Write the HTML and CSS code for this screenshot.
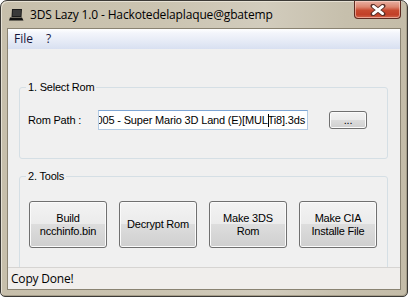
FILE: index.html
```html
<!DOCTYPE html>
<html>
<head>
<meta charset="utf-8">
<link rel="stylesheet" href="styles.css">
</head>
<body>
<div class="window">
  <div class="titlebar">
    <svg class="appicon" width="15" height="12" viewBox="0 0 15 12">
      <polygon points="3,0 13,0 12.5,8 2.5,8" fill="#1c1c1c"/>
      <polygon points="4,1 12,1 11.6,7 3.6,7" fill="#3a3a3a"/>
      <polygon points="1,8.5 13,8.5 14.5,11.5 0,11.5" fill="#111"/>
    </svg>
    <span class="title">3DS Lazy 1.0 - Hackotedelaplaque@gbatemp</span>
    <div class="close">
      <svg width="16" height="12" viewBox="0 0 16 12">
        <path d="M3 2 L13 10 M13 2 L3 10" stroke="#5a3028" stroke-width="4.8" stroke-linecap="round"/>
        <path d="M3.4 2.4 L12.6 9.6 M12.6 2.4 L3.4 9.6" stroke="#fff" stroke-width="2.8" stroke-linecap="round"/>
      </svg>
    </div>
  </div>
  <div class="client">
    <div class="menubar"><span class="mi">File</span><span class="mi">?</span></div>
    <div class="content">
      <div class="group g1">
        <span class="legend">1. Select Rom</span>
        <div class="row">
          <span class="lbl">Rom Path :</span>
          <div class="textbox"><span class="val">005 - Super Mario 3D Land (E)[MUL<i class="caret"></i>Ti8].3ds</span></div>
          <div class="btn small">...</div>
        </div>
      </div>
      <div class="group g2">
        <span class="legend">2. Tools</span>
        <div class="tools">
          <div class="btn big">Build<br>ncchinfo.bin</div>
          <div class="btn big">Decrypt Rom</div>
          <div class="btn big">Make 3DS<br>Rom</div>
          <div class="btn big">Make CIA<br>Installe File</div>
        </div>
      </div>
    </div>
    <div class="status">Copy Done!</div>
  </div>
</div>
</body>
</html>
```
FILE: styles.css
```css
html, body {
  margin: 0;
  padding: 0;
  background: #fff;
}
.window {
  width: 408px;
  height: 297px;
  box-sizing: border-box;
  border: 1px solid #3c3a36;
  border-radius: 7px 7px 5px 5px;
  padding: 0 7px 7px 7px;
  background: linear-gradient(to right, #c7bfab 0%, #cbc4b1 40%, #d2ccbd 65%, #c6bfac 85%, #c4bca8 100%);
  box-shadow: inset 1px 1px 0 #e6e1d4, inset -1px -1px 0 #a69e8a;
  display: flex;
  flex-direction: column;
}
.titlebar {
  height: 28px;
  display: flex;
  align-items: flex-start;
}
.appicon {
  margin: 8px 0 0 1px;
  flex: none;
}
.title {
  font-family: "Open Sans", "Noto Sans", sans-serif;
  font-size: 12px;
  line-height: 16px;
  margin: 6px 0 0 6px;
  color: #000;
  letter-spacing: -0.15px;
  white-space: nowrap;
}
.close {
  margin-left: auto;
  margin-right: -1px;
  width: 47px;
  height: 18px;
  box-sizing: border-box;
  border: 1px solid #5e2a20;
  border-top: none;
  border-radius: 0 0 4px 4px;
  background: linear-gradient(to bottom, #e8b0a2 0%, #dc8670 35%, #c84a30 55%, #c23f27 80%, #d0664c 100%);
  box-shadow: inset 0 0 0 1px rgba(255,220,210,0.55);
  display: flex;
  align-items: center;
  justify-content: center;
}
.client {
  height: 260px;
  display: flex;
  flex-direction: column;
  background: #f0f0f0;
  box-shadow: 0 0 0 1px #8a8372;
}
.menubar {
  height: 20px;
  flex: none;
  background: linear-gradient(to bottom, #ffffff 0%, #f3f5fb 20%, #e6ebf6 60%, #d8e0f1 100%);
  display: flex;
  align-items: center;
  padding-left: 6px;
  font-family: "Open Sans", "Noto Sans", sans-serif;
  font-size: 12px;
  color: #14143a;
}
.mi {
  padding: 0 7px 0 0;
  margin-right: 6px;
  line-height: 16px;
}
.content {
  flex: 1;
  overflow: hidden;
  font-family: "Liberation Sans", Arial, sans-serif;
  font-size: 11px;
  letter-spacing: -0.2px;
  color: #000;
}
.group {
  margin-left: 11px;
  width: 369px;
  box-sizing: border-box;
  border: 1px solid #d5dfe5;
  border-radius: 3px;
  display: flex;
  flex-direction: column;
}
.g1 {
  margin-top: 38px;
  height: 72px;
}
.g2 {
  margin-top: 17px;
  height: 130px;
}
.legend {
  align-self: flex-start;
  margin: -7px 0 0 6px;
  padding: 0 2px;
  line-height: 13px;
  background: #f0f0f0;
}
.row {
  margin-top: 16px;
  height: 20px;
  display: flex;
  align-items: center;
  padding-left: 8px;
}
.lbl {
  width: 70px;
  flex: none;
}
.textbox {
  width: 210px;
  height: 20px;
  box-sizing: border-box;
  border: 1px solid #b3cbe4;
  border-top-color: #7fa6d4;
  background: #fff;
  display: flex;
  align-items: center;
  justify-content: flex-end;
  overflow: hidden;
  padding-right: 2px;
  flex: none;
}
.val {
  white-space: nowrap;
  line-height: 13px;
  letter-spacing: -0.17px;
}
.caret {
  display: inline-block;
  width: 0;
  height: 13px;
  border-left: 1px solid #000;
  vertical-align: top;
  margin-right: -1px;
}
.btn {
  box-sizing: border-box;
  border: 1px solid #707070;
  border-radius: 3px;
  background: linear-gradient(to bottom, #f3f3f3 0%, #ebebeb 49%, #dddddd 50%, #cfcfcf 100%);
  box-shadow: inset 0 0 0 1px #fbfbfb;
  display: flex;
  align-items: center;
  justify-content: center;
  text-align: center;
  line-height: 13px;
  flex: none;
}
.small {
  margin-left: 21px;
  width: 38px;
  height: 18px;
}
.tools {
  margin-top: 18px;
  padding-left: 9px;
  display: flex;
  gap: 12px;
}
.big {
  width: 78px;
  height: 47px;
}
.status {
  height: 22px;
  flex: none;
  box-sizing: border-box;
  border-top: 1px solid #d6d4d2;
  background: #f0eeec;
  padding-left: 3px;
  display: flex;
  align-items: center;
  font-family: "Open Sans", "Noto Sans", sans-serif;
  font-size: 12px;
  letter-spacing: -0.2px;
  color: #000;
}
```
